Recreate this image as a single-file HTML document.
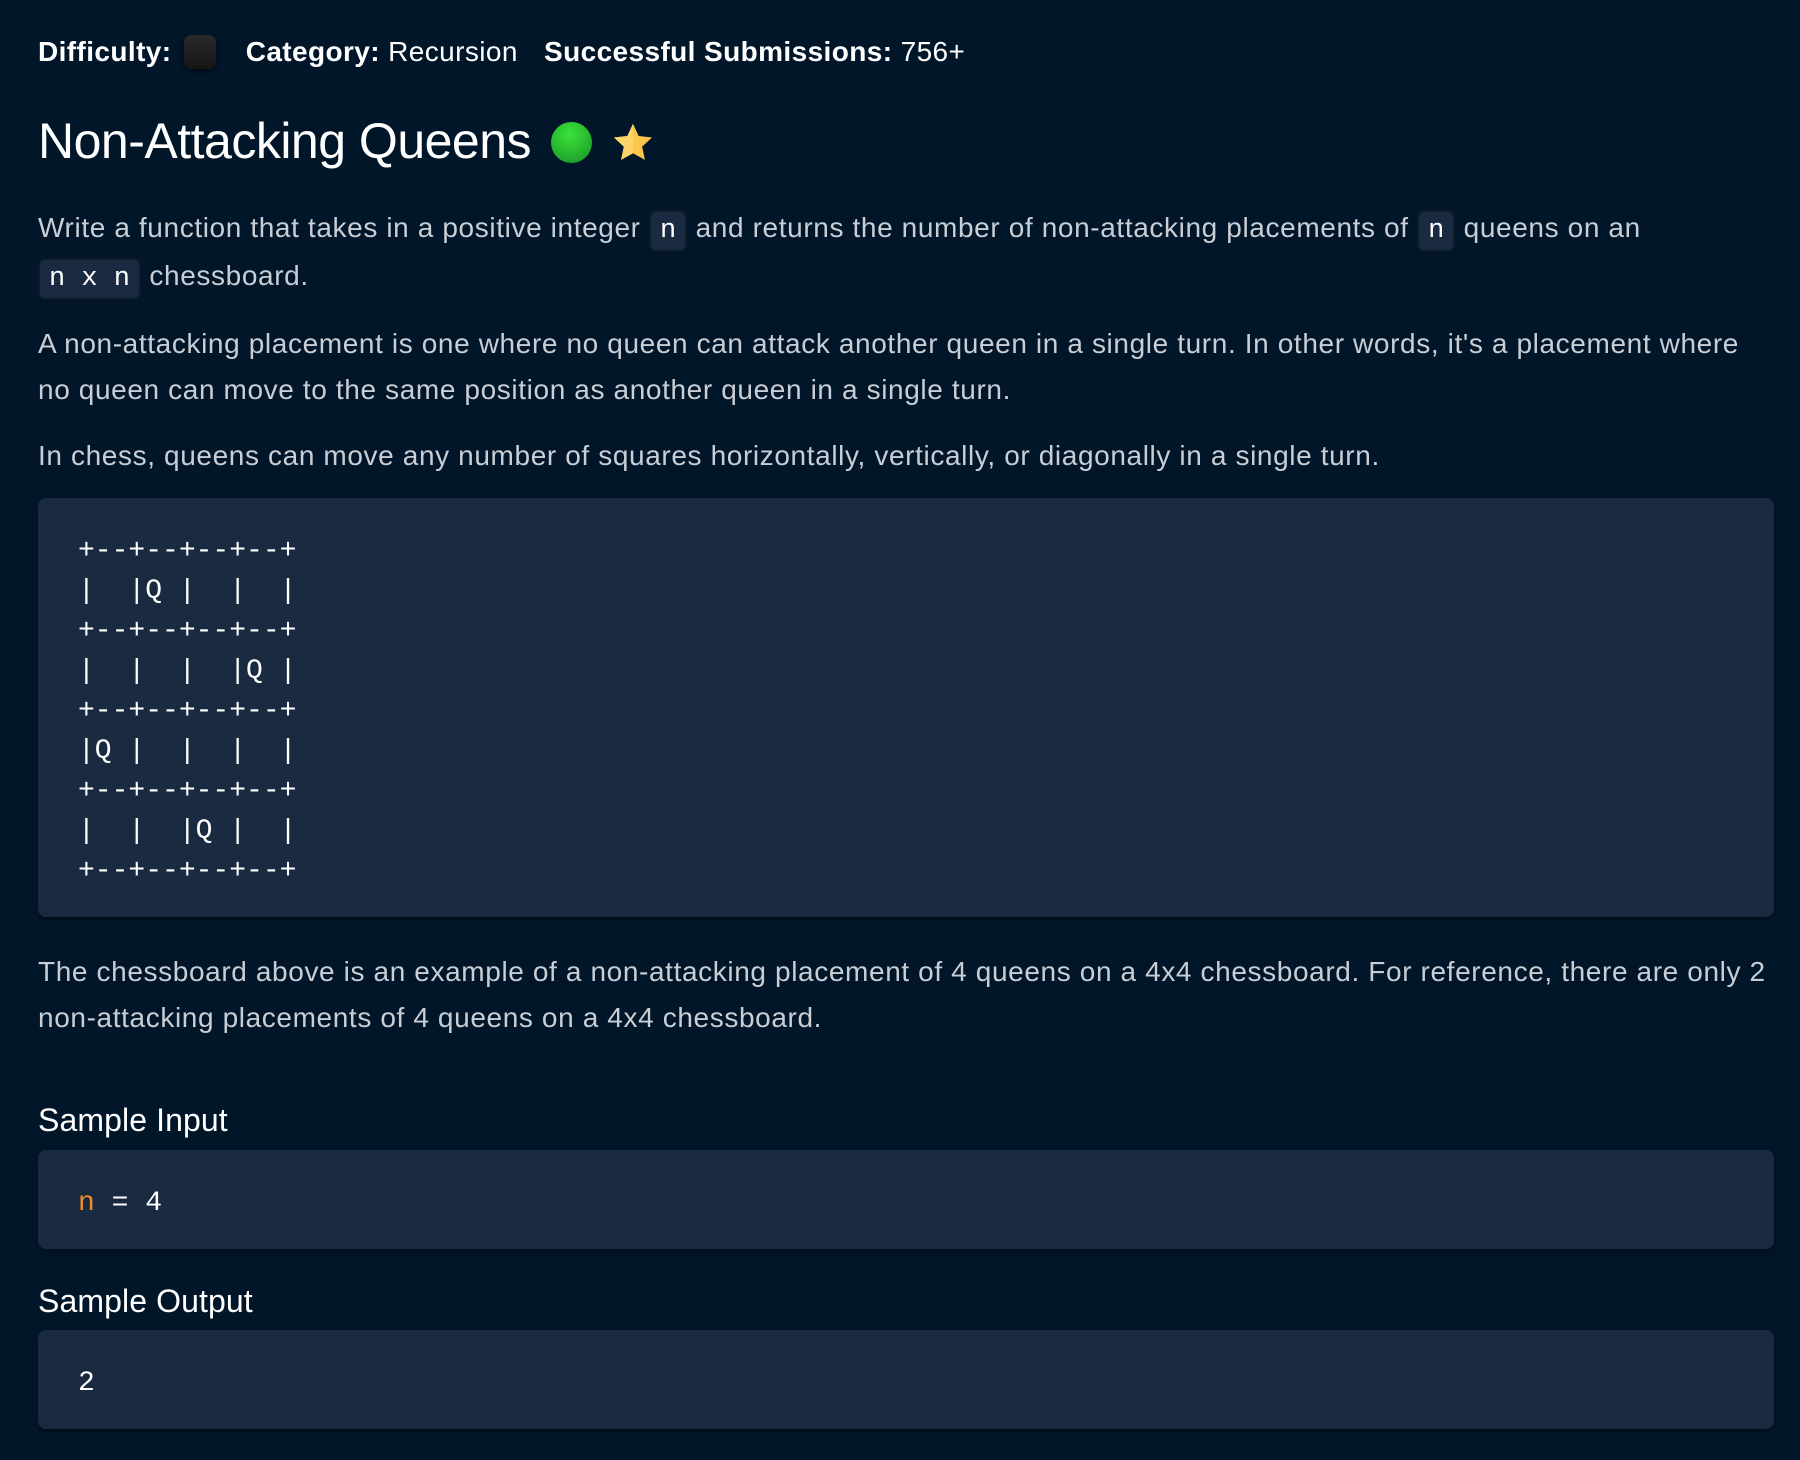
<!DOCTYPE html>
<html><head><meta charset="utf-8"><style>
html,body{margin:0;padding:0;}
body{width:1800px;height:1460px;background:#02162a;position:relative;overflow:hidden;font-family:"Liberation Sans",sans-serif;}
.a{position:absolute;white-space:nowrap;}
.hdr{top:35px;left:38px;font-size:28px;color:#fff;letter-spacing:0.4px;}
.hdr b{font-weight:bold;}
.p{font-size:28px;color:#c9ced4;letter-spacing:0.62px;line-height:46px;}
.ic{display:inline-block;background:#1a2b41;border:2px solid #0c1a2a;border-radius:7px;font-family:"Liberation Mono",monospace;color:#fff;padding:0 9px;line-height:38px;font-size:27px;letter-spacing:0;}
.box{position:absolute;left:38px;width:1736px;background:#1a2b41;border-radius:8px;box-shadow:0 2px 6px rgba(0,0,0,.5);}
pre{margin:0;font-family:"Liberation Mono",monospace;font-size:28px;color:#fff;line-height:40px;position:absolute;left:40px;}
h2{margin:0;position:absolute;left:38px;font-size:32px;font-weight:normal;color:#fff;letter-spacing:0.1px;}
</style></head><body>
<div class="a hdr"><b>Difficulty:</b> <span style="display:inline-block;width:32px;height:34px;background:linear-gradient(#2a2a2a,#151515);border-radius:7px;vertical-align:-8px;margin:0 30px 0 4px;box-shadow:0 2px 4px rgba(0,0,0,.6)"></span><b>Category:</b> Recursion <span style="display:inline-block;width:18px"></span><b>Successful Submissions:</b> 756+</div>
<div class="a" style="top:112px;left:38px;font-size:50px;color:#fff;letter-spacing:-0.5px;">Non-Attacking Queens</div>
<div class="a" style="top:122px;left:551px;width:41px;height:41px;border-radius:50%;background:radial-gradient(circle at 45% 30%,#3be33b,#1fa02a 80%);"></div>
<svg class="a" style="top:121px;left:611px" width="44" height="44" viewBox="0 0 24 24"><path d="M12 1.5l3.1 6.7 7.3.8-5.4 5 1.5 7.2L12 17.6l-6.5 3.6L7 14l-5.4-5 7.3-.8z" fill="#fbc64b"/><path d="M12 1.5v16.1l-6.5 3.6L7 14l-5.4-5 7.3-.8z" fill="#fdd46a"/></svg>
<div class="a p" style="top:205px;left:38px;">Write a function that takes in a positive integer <span class="ic">n</span> and returns the number of non-attacking placements of <span class="ic">n</span> queens on an</div>
<div class="a p" style="top:253px;left:38px;"><span class="ic">n x n</span> chessboard.</div>
<div class="a p" style="top:321px;left:38px;">A non-attacking placement is one where no queen can attack another queen in a single turn. In other words, it's a placement where</div>
<div class="a p" style="top:367px;left:38px;">no queen can move to the same position as another queen in a single turn.</div>
<div class="a p" style="top:433px;left:38px;">In chess, queens can move any number of squares horizontally, vertically, or diagonally in a single turn.</div>
<div class="box" style="top:498px;height:419px;"><pre style="top:34px;">+--+--+--+--+
|  |Q |  |  |
+--+--+--+--+
|  |  |  |Q |
+--+--+--+--+
|Q |  |  |  |
+--+--+--+--+
|  |  |Q |  |
+--+--+--+--+</pre></div>
<div class="a p" style="top:949px;left:38px;">The chessboard above is an example of a non-attacking placement of 4 queens on a 4x4 chessboard. For reference, there are only 2</div>
<div class="a p" style="top:995px;left:38px;">non-attacking placements of 4 queens on a 4x4 chessboard.</div>
<h2 style="top:1102px;">Sample Input</h2>
<div class="box" style="top:1150px;height:99px;"><pre style="top:34px;"><span style="color:#f08a2c">n</span> = 4</pre></div>
<h2 style="top:1283px;">Sample Output</h2>
<div class="box" style="top:1330px;height:99px;"><pre style="top:34px;">2</pre></div>
</body></html>
